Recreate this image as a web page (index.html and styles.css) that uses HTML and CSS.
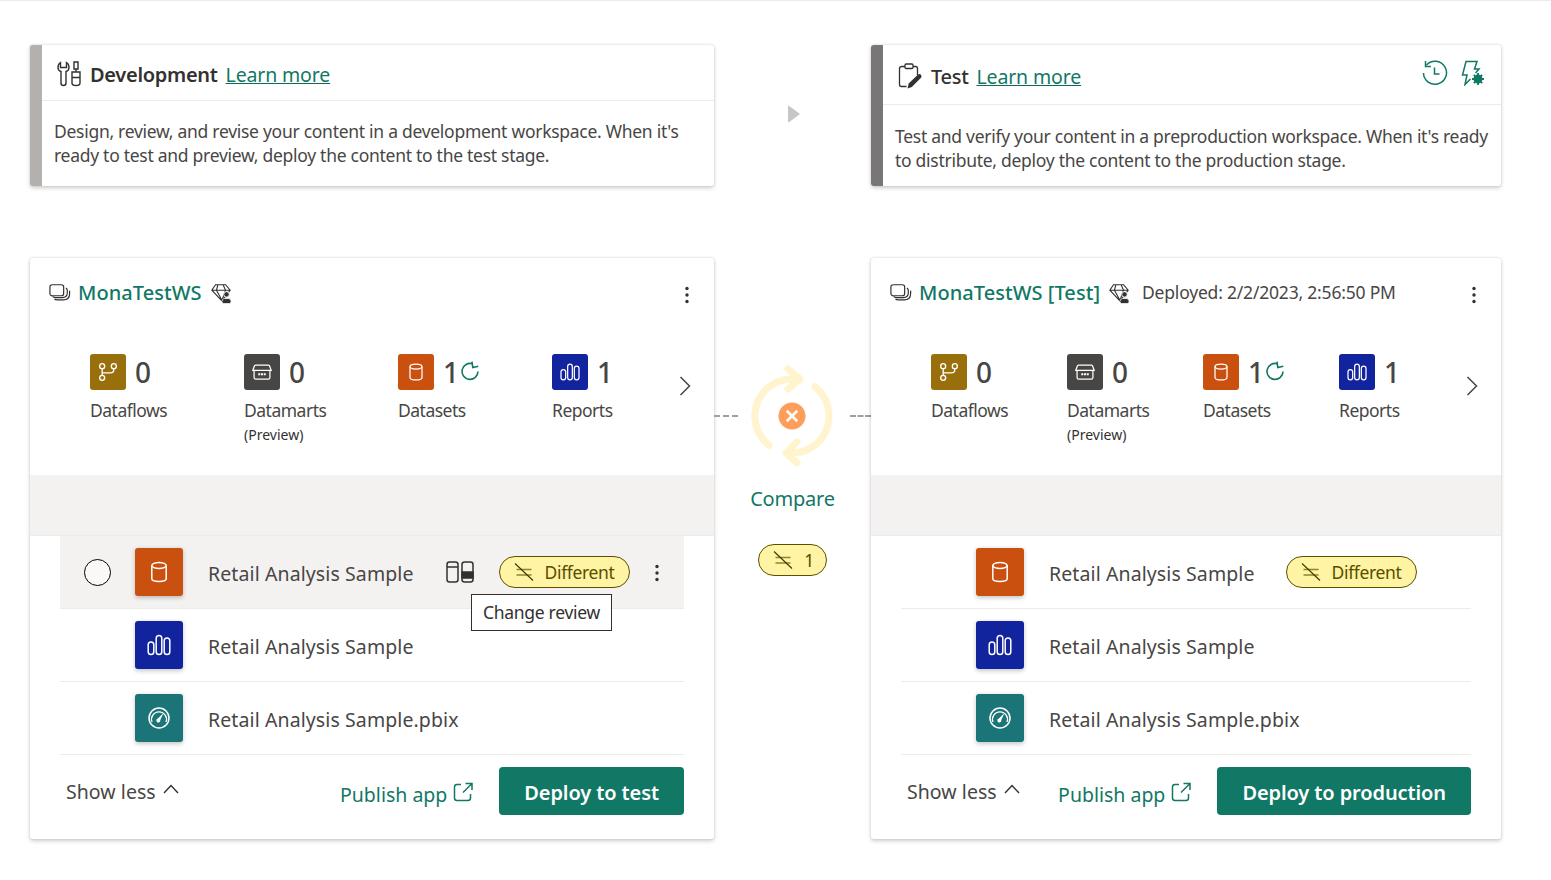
FILE: index.html
```html
<!DOCTYPE html>
<html lang="en">
<head>
<meta charset="utf-8">
<title>Deployment pipeline</title>
<link rel="stylesheet" href="styles.css">
</head>
<body>
<svg class="defs" width="0" height="0" aria-hidden="true">
  <symbol id="i-flow" viewBox="0 0 24 24"><g fill="none" stroke="currentColor" stroke-width="1.600"><circle cx="5" cy="5" r="3"/><circle cx="19" cy="5" r="3"/><circle cx="5" cy="19" r="3"/><path d="M5 8v8M19 8v1q0 4-4 4H5"/></g></symbol>
  <symbol id="i-mart" viewBox="0 0 24 24"><g fill="none" stroke="currentColor" stroke-width="1.500"><path d="M1 10 3 4.500q.5-.8 1.500-.8h15q1 0 1.500.8L23 10zM2.500 10v8.500q0 2 2 2h15q2 0 2-2V10"/></g><path fill="currentColor" d="M7.500 13.500h2.400v2.400H7.500zM10.800 13.500h2.400v2.400h-2.400zM14.100 13.500h2.400v2.400h-2.400z"/></symbol>
  <symbol id="i-set" viewBox="0 0 24 24"><g fill="none" stroke="currentColor" stroke-width="1.500"><ellipse cx="12" cy="5.500" rx="7.200" ry="3"/><path d="M4.800 5.500v13c0 1.700 3.200 3 7.200 3s7.200-1.300 7.200-3v-13"/></g></symbol>
  <symbol id="i-rep" viewBox="0 0 24 24"><g fill="none" stroke="currentColor" stroke-width="1.500"><rect x="1.200" y="9" width="5.600" height="12.500" rx="2.800"/><rect x="9.200" y="2.500" width="5.600" height="19" rx="2.800"/><rect x="17.200" y="5" width="5.600" height="16.500" rx="2.800"/></g></symbol>
  <symbol id="i-dash" viewBox="0 0 24 24"><g fill="none" stroke="currentColor" stroke-width="1.500"><circle cx="12" cy="12" r="10"/><path d="M5 16a7.500 7.500 0 1 1 14 0" stroke-width="1.300"/></g><path fill="currentColor" d="M16.500 7 13.300 14a2 2 0 1 1-2.400-1.500z"/></symbol>
  <symbol id="i-stack" viewBox="0 0 24 24"><g fill="none" stroke="#323130" stroke-width="1.300"><rect x="1" y="3" width="15" height="12" rx="2.500"/><path d="M18.500 6.500q1.500 1 1.500 3v2q0 5.500-5.500 5.500H7q-2 0-3-1.500"/><path d="M22.500 9.500v3q0 7-7 7H9q-2 0-3-1"/></g></symbol>
  <symbol id="i-gem" viewBox="0 0 24 24"><g fill="none" stroke="#323130" stroke-width="1.200"><path d="M6 3h11l5 6-9 11.500L2 9zM2 9h20M8.500 3.500 7 9l6 11M14.500 3.500 17 9l-4 11"/></g><circle cx="18" cy="13.500" r="3" fill="#323130" stroke="#fff"/><path d="M13 21.500q0-3.500 3-3.500h4q3 0 3 3.500 0 2-2 2h-6q-2 0-2-2z" fill="#323130" stroke="#fff" stroke-width=".8"/></symbol>
  <symbol id="i-refresh" viewBox="0 0 20 20"><g fill="none" stroke="currentColor" stroke-width="1.600"><path d="M18 10.500A8 8 0 1 1 12.500 2.800"/><path d="M12 .6l.8 6 5.500-1.300"/></g></symbol>
  <symbol id="i-more" viewBox="0 0 4 18"><circle cx="2" cy="2.500" r="1.700" fill="#323130"/><circle cx="2" cy="9" r="1.700" fill="#323130"/><circle cx="2" cy="15.500" r="1.700" fill="#323130"/></symbol>
  <symbol id="i-next" viewBox="0 0 12 20"><path d="M1.500 1 10.500 10 1.500 19" fill="none" stroke="#484644" stroke-width="1.500"/></symbol>
  <symbol id="i-diff" viewBox="0 0 20 18"><path d="M2.500 6.500h15M2.500 12h15" fill="none" stroke="#8f8332" stroke-width="1.500"/><path d="M1 .5 19 17.500" fill="none" stroke="#3d3500" stroke-width="1.100"/></symbol>
  <symbol id="i-up" viewBox="0 0 16 10"><path d="M1 9 8 1.500 15 9" fill="none" stroke="#323130" stroke-width="1.400"/></symbol>
  <symbol id="i-ext" viewBox="0 0 20 20"><g fill="none" stroke="currentColor" stroke-width="1.500"><path d="M8 2.500H4Q1.500 2.500 1.500 5v11q0 2.500 2.500 2.500h11q2.500 0 2.500-2.500v-4"/><path d="M12.500 1.500h6.500V8M19 1.500l-9 9"/></g></symbol>
</svg>

<main class="pipeline">
  <section class="stage stage-dev">
    <header class="stage-head">
      <svg class="stage-icon" viewBox="0 0 24 26" fill="none" stroke="#323130" stroke-width="1.400"><path d="M3.500 1.500Q1 3 1 6.500 1 9.500 4 10.500V22q0 2.500 2.500 2.500T9 22V10.500q3-1 3-4 0-3.500-2.500-5v5h-6z"/><path d="M17 1h4v7h-4zM19 8v3M15 11h8v11q0 2.500-4 2.500T15 22zM15 16.500h8"/></svg>
      <h2 class="stage-name">Development</h2>
      <a class="stage-link" href="#">Learn more</a>
    </header>
    <p class="stage-text">Design, review, and revise your content in a development workspace. When it's ready to test and preview, deploy the content to the test stage.</p>
  </section>

  <div class="arrow-cell"><span class="arrow"></span></div>

  <section class="stage stage-test">
    <header class="stage-head">
      <svg class="stage-icon" viewBox="0 0 24 26" fill="none" stroke="#323130" stroke-width="1.300"><path d="M7 3.500H4Q1.500 3.500 1.500 5.500v16q0 2 2 2h5M15 3.500h2.500q2 0 2 2V12"/><rect x="7" y="1" width="8" height="4.500" rx="1.200"/><path d="M9.500 25.500l1.200-5L20 11.500q1.500-1 3 .3 1 1.600 0 3L13.800 24z" fill="#323130" stroke="none"/></svg>
      <h2 class="stage-name">Test</h2>
      <a class="stage-link" href="#">Learn more</a>
      <div class="stage-tools">
        <svg class="tool" viewBox="0 0 26 26" fill="none" stroke="#117865" stroke-width="1.500"><path d="M4.500 5A11.500 11.500 0 1 1 1.500 13"/><path d="M3.500 1v5.500H9"/><path d="M12.500 7.500V14h5"/></svg>
        <svg class="tool" viewBox="0 0 26 26" fill="none" stroke="#117865" stroke-width="1.500"><path d="M9.500 19 4 24.500 6 15H1.500L5 1.500H16L13.500 9H18L14.500 13"/><circle cx="17" cy="19" r="3" stroke-width="3"/><path d="M17 13v12M11 19h12M12.800 14.800l8.400 8.400M21.200 14.800l-8.400 8.400" stroke-width="1.800"/></svg>
      </div>
    </header>
    <p class="stage-text">Test and verify your content in a preproduction workspace. When it's ready to distribute, deploy the content to the production stage.</p>
  </section>

  <section class="card card-dev">
    <div class="card-title">
      <svg class="ws-icon"><use href="#i-stack"/></svg>
      <h3 class="ws-name">MonaTestWS</h3>
      <svg class="gem-icon"><use href="#i-gem"/></svg>
      <svg class="kebab"><use href="#i-more"/></svg>
    </div>
    <div class="stats">
      <div class="stat"><div class="stat-top"><span class="tile tile-flow"><svg><use href="#i-flow"/></svg></span><b class="num">0</b></div><div class="stat-label">Dataflows</div></div>
      <div class="stat"><div class="stat-top"><span class="tile tile-mart"><svg><use href="#i-mart"/></svg></span><b class="num">0</b></div><div class="stat-label">Datamarts</div><div class="stat-note">(Preview)</div></div>
      <div class="stat"><div class="stat-top"><span class="tile tile-set"><svg><use href="#i-set"/></svg></span><b class="num">1</b><svg class="refresh"><use href="#i-refresh"/></svg></div><div class="stat-label">Datasets</div></div>
      <div class="stat"><div class="stat-top"><span class="tile tile-rep"><svg><use href="#i-rep"/></svg></span><b class="num">1</b></div><div class="stat-label">Reports</div></div>
      <svg class="next"><use href="#i-next"/></svg>
    </div>
    <div class="band"></div>
    <ul class="items">
      <li class="item item-hover">
        <span class="radio"></span>
        <span class="tile big tile-set"><svg><use href="#i-set"/></svg></span>
        <span class="item-name">Retail Analysis Sample</span>
        <svg class="review" viewBox="0 0 28 22" fill="none" stroke="#323130" stroke-width="1.500"><rect x="1" y="1" width="11" height="20" rx="2.500"/><path d="M1 6h11"/><rect x="16" y="1" width="11" height="20" rx="2.500"/><path d="M16 11h11v6h-11z" fill="#323130"/></svg>
        <span class="pill"><svg><use href="#i-diff"/></svg>Different</span>
        <svg class="kebab row-kebab"><use href="#i-more"/></svg>
        <span class="tip">Change review</span>
      </li>
      <li class="item">
        <span class="spacer"></span>
        <span class="tile big tile-rep"><svg><use href="#i-rep"/></svg></span>
        <span class="item-name">Retail Analysis Sample</span>
      </li>
      <li class="item">
        <span class="spacer"></span>
        <span class="tile big tile-dash"><svg><use href="#i-dash"/></svg></span>
        <span class="item-name">Retail Analysis Sample.pbix</span>
      </li>
    </ul>
    <footer class="card-foot">
      <span class="less">Show less<svg><use href="#i-up"/></svg></span>
      <a class="publish" href="#">Publish app<svg><use href="#i-ext"/></svg></a>
      <button class="deploy" type="button">Deploy to test</button>
    </footer>
  </section>

  <div class="compare">
    <div class="compare-row">
      <span class="dash dash-l"></span>
      <svg class="compare-icon" viewBox="2 0 90 110" fill="none">
        <g stroke="#fff4ce" stroke-width="7" stroke-linecap="round" stroke-linejoin="round">
          <path d="M22.200 83.200A37 37 0 0 1 52.700 17.800"/>
          <path d="M41 7 53 17 41 27"/>
          <path d="M67.800 24.800A37 37 0 0 1 39.900 90.600"/>
          <path d="M50 80 39 91 50 101"/>
        </g>
        <circle cx="45" cy="54" r="13.500" fill="#ff9e5a"/>
        <path d="M40.500 49.500l9 9M49.500 49.500l-9 9" stroke="#fff" stroke-width="2.500" stroke-linecap="round"/>
      </svg>
      <span class="dash dash-r"></span>
    </div>
    <div class="compare-label">Compare</div>
    <span class="pill pill-small"><svg><use href="#i-diff"/></svg>1</span>
  </div>

  <section class="card card-test">
    <div class="card-title">
      <svg class="ws-icon"><use href="#i-stack"/></svg>
      <h3 class="ws-name">MonaTestWS [Test]</h3>
      <svg class="gem-icon"><use href="#i-gem"/></svg>
      <span class="deployed">Deployed: 2/2/2023, 2:56:50 PM</span>
      <svg class="kebab"><use href="#i-more"/></svg>
    </div>
    <div class="stats">
      <div class="stat"><div class="stat-top"><span class="tile tile-flow"><svg><use href="#i-flow"/></svg></span><b class="num">0</b></div><div class="stat-label">Dataflows</div></div>
      <div class="stat"><div class="stat-top"><span class="tile tile-mart"><svg><use href="#i-mart"/></svg></span><b class="num">0</b></div><div class="stat-label">Datamarts</div><div class="stat-note">(Preview)</div></div>
      <div class="stat"><div class="stat-top"><span class="tile tile-set"><svg><use href="#i-set"/></svg></span><b class="num">1</b><svg class="refresh"><use href="#i-refresh"/></svg></div><div class="stat-label">Datasets</div></div>
      <div class="stat"><div class="stat-top"><span class="tile tile-rep"><svg><use href="#i-rep"/></svg></span><b class="num">1</b></div><div class="stat-label">Reports</div></div>
      <svg class="next"><use href="#i-next"/></svg>
    </div>
    <div class="band"></div>
    <ul class="items">
      <li class="item">
        <span class="spacer"></span>
        <span class="tile big tile-set"><svg><use href="#i-set"/></svg></span>
        <span class="item-name">Retail Analysis Sample</span>
        <span class="pill"><svg><use href="#i-diff"/></svg>Different</span>
      </li>
      <li class="item">
        <span class="spacer"></span>
        <span class="tile big tile-rep"><svg><use href="#i-rep"/></svg></span>
        <span class="item-name">Retail Analysis Sample</span>
      </li>
      <li class="item">
        <span class="spacer"></span>
        <span class="tile big tile-dash"><svg><use href="#i-dash"/></svg></span>
        <span class="item-name">Retail Analysis Sample.pbix</span>
      </li>
    </ul>
    <footer class="card-foot">
      <span class="less">Show less<svg><use href="#i-up"/></svg></span>
      <a class="publish" href="#">Publish app<svg><use href="#i-ext"/></svg></a>
      <button class="deploy" type="button">Deploy to production</button>
    </footer>
  </section>
</main>
</body>
</html>
```

FILE: styles.css
```css
* { box-sizing: border-box; }
html, body { margin: 0; height: 100%; overflow: hidden; }
body {
  background: #fff;
  border-top: 1px solid #edebe9;
  font-family: "Noto Sans", "Open Sans", sans-serif;
  color: #323130;
}
.defs { position: absolute; }
svg { display: block; flex: none; }

.pipeline {
  display: grid;
  grid-template-columns: 684px 157px 630px;
  grid-template-rows: 141px 581px;
  row-gap: 72px;
  padding: 44px 0 0 30px;
}

.stage {
  background: #fff;
  border-left: 12px solid #b3b0ad;
  border-radius: 3px;
  box-shadow: 0 1.6px 4px rgba(0,0,0,.2), 0 0 2px rgba(0,0,0,.1);
}
.stage-test { border-left-color: #797775; }
.stage-head {
  display: flex;
  align-items: center;
  height: 56px;
  padding: 3px 0 0 15px;
  border-bottom: 1px solid #edebe9;
}
.stage-test .stage-head { height: 60px; padding-top: 4px; }
.stage-icon { width: 24px; height: 26px; margin: 0 9px 0 0; }
.stage-test .stage-icon { margin-top: -2px; }
.stage-name { margin: 0 8px 0 0; font-size: 20px; font-weight: 600; letter-spacing: -.3px; }
.stage-test .stage-name { font-weight: 500; }
.stage-link { font-size: 19.500px; letter-spacing: -.15px; color: #117865; text-decoration-color: #0b6a58; }
.stage-tools { display: flex; gap: 13px; margin: -8px 14px 0 auto; }
.tool { width: 26px; height: 26px; }
.stage-text {
  margin: 18px 0 0 12px;
  font-size: 17.500px;
  line-height: 24px;
  letter-spacing: -.28px;
  color: #484644;
  width: 650px;
}
.stage-test .stage-text { width: 600px; margin-top: 19px; }

.arrow-cell { display: flex; justify-content: center; padding: 60px 0 0 2px; }
.arrow {
  width: 0; height: 0;
  border-left: 12px solid #c8c6c4;
  border-top: 9px solid transparent;
  border-bottom: 9px solid transparent;
  border-radius: 2px;
}

.card {
  display: flex;
  flex-direction: column;
  background: #fff;
  border-radius: 3px;
  box-shadow: 0 1.6px 4px rgba(0,0,0,.2), 0 0 2px rgba(0,0,0,.1);
}
.card-title {
  display: flex;
  align-items: center;
  height: 72px;
  padding: 0 25px 4px 19px;
}
.ws-icon { width: 22px; height: 22px; margin: 2px 7px 0 0; }
.ws-name { margin: 0 8px 0 0; font-size: 20px; font-weight: 500; letter-spacing: .05px; color: #117865; }
.gem-icon { width: 22px; height: 22px; margin-top: 2px; }
.deployed { margin-left: 12px; font-size: 17.500px; letter-spacing: -.2px; color: #484644; }
.kebab { width: 4px; height: 18px; margin-left: auto; margin-top: 5px; }

.stats {
  position: relative;
  display: grid;
  grid-template-columns: repeat(4, 154px);
  height: 145px;
  padding: 24px 0 0 60px;
}
.card-test .stats { grid-template-columns: repeat(4, 136px); }
.stat-top { display: flex; align-items: center; height: 36px; }
.tile { display: flex; align-items: center; justify-content: center; width: 36px; height: 36px; border-radius: 3px; color: #fff; }
.tile svg { width: 20px; height: 20px; }
.tile.big { width: 48px; height: 48px; box-shadow: 0 1.6px 4px rgba(0,0,0,.22); }
.tile.big svg { width: 24px; height: 24px; }
.tile-flow { background: #986f0b; }
.tile-mart { background: #484644; }
.tile-set { background: #ca5010; }
.tile-rep { background: #12239e; }
.tile-dash { background: #1a7478; }
.num { margin-left: 9px; font-size: 28px; font-weight: 500; color: #484644; line-height: 36px; }
.refresh { width: 20px; height: 20px; margin: -2px 0 0 1px; color: #117865; }
.stat-label { margin-top: 8px; font-size: 17.500px; line-height: 24px; letter-spacing: -.5px; color: #484644; }
.stat-note { margin-top: 1px; font-size: 14px; line-height: 24px; letter-spacing: 0; color: #323130; }
.next { position: absolute; right: 23px; top: 46px; width: 12px; height: 20px; }

.band { height: 60px; background: #f3f2f1; }

.items { list-style: none; margin: 0; padding: 0 30px; border-top: 1px solid #edebe9; }
.item {
  position: relative;
  display: flex;
  align-items: center;
  height: 73px;
  border-bottom: 1px solid #edebe9;
}
.item-hover { background: #f3f2f1; }
.radio { width: 27px; height: 27px; margin: 0 24px; border: 1px solid #000; border-radius: 50%; background: #faf9f8; }
.spacer { width: 75px; flex: none; }
.item-name { margin-left: 25px; padding-top: 2px; font-size: 19.500px; letter-spacing: .1px; color: #484644; white-space: nowrap; }
.review { width: 28px; height: 22px; margin-left: 32px; }
.pill {
  display: inline-flex;
  align-items: center;
  height: 32px;
  padding: 0 15px 0 14px;
  margin-left: 31px;
  background: #fff4a3;
  border: 1px solid #5c5000;
  border-radius: 16px;
  font-size: 17.500px;
  letter-spacing: -.35px;
  color: #594d00;
}
.item-hover .pill { margin-left: 25px; }
.pill svg { width: 20px; height: 18px; margin-right: 11px; }
.row-kebab { margin: 2px 25px 0 auto; }
.tip {
  position: absolute;
  left: 411px;
  top: 58px;
  z-index: 2;
  height: 37px;
  padding: 0 11px;
  line-height: 35px;
  background: #fff;
  border: 1px solid #323130;
  font-size: 17.500px;
  letter-spacing: -.3px;
  white-space: nowrap;
}

.card-foot { display: flex; align-items: center; height: 84px; padding: 0 30px 12px 36px; }
.less { display: flex; align-items: center; font-size: 19.500px; letter-spacing: .05px; color: #484644; }
.less svg { width: 16px; height: 10px; margin: -4px 0 0 7px; }
.publish { display: flex; align-items: center; margin: 6px 26px 0 auto; font-size: 19.500px; letter-spacing: 0; color: #117865; text-decoration: none; }
.publish svg { width: 20px; height: 20px; margin: -5px 0 0 6px; }
.deploy {
  height: 48px;
  padding: 2px 25px 0;
  border: 0;
  border-radius: 4px;
  background: #117865;
  color: #fff;
  font: 600 20px "Noto Sans", sans-serif;
  letter-spacing: -.1px;
}

.compare { display: flex; flex-direction: column; align-items: center; }
.compare-row { display: flex; align-items: center; justify-content: space-between; width: 100%; padding-top: 104px; }
.compare-icon { width: 90px; height: 110px; }
.dash { width: 24px; border-top: 2px dashed #a19f9d; margin-top: -3px; }
.dash-r { width: 21px; }
.compare-label { margin-top: 13px; font-size: 20px; letter-spacing: -.2px; color: #117865; }
.pill-small { margin: 32px 0 0; padding: 0 12px 0 14px; }
```
